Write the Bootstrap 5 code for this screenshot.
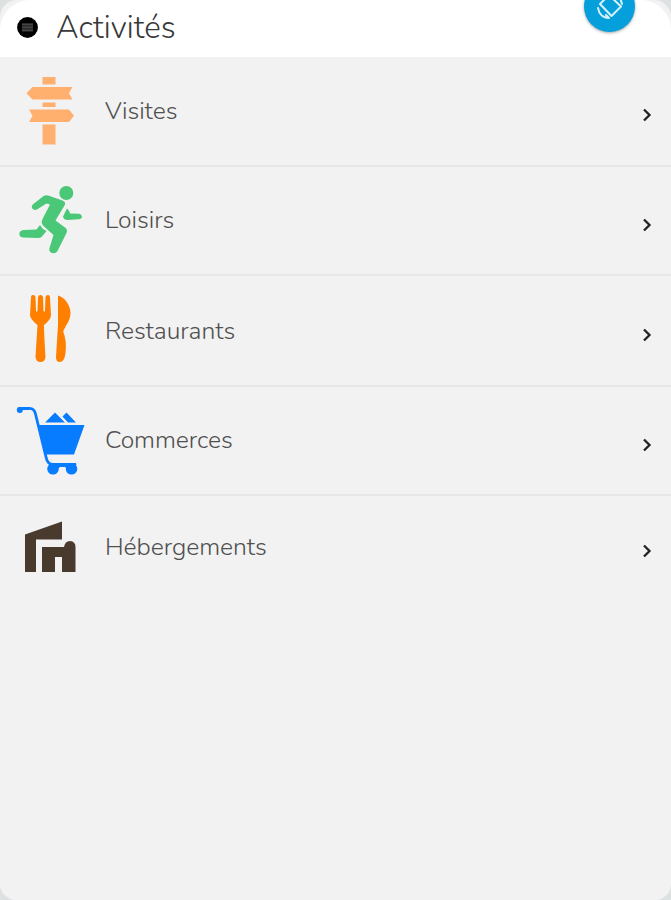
<!DOCTYPE html>
<html lang="fr">
<head>
<meta charset="utf-8">
<meta name="viewport" content="width=device-width, initial-scale=1">
<title>Activités</title>
<link href="https://cdn.jsdelivr.net/npm/bootstrap@5.3.0/dist/css/bootstrap.min.css" rel="stylesheet">
<style>
body { background: #dde1e1; font-family: Nunito, Lato, "Open Sans", sans-serif; font-weight: 300; color: #444; }
.screen { height: 900px; background: #f2f2f2; border-radius: 17px 17px 16px 16px; }
.topbar { height: 57px; background: #fff; border-radius: 30px 30px 0 0; padding-left: 17px; gap: 18px; }
.topbar h1 { font-size: 31.3px; font-weight: 300; line-height: 56px; letter-spacing: .1px; color: #383838; }
.menu-dot { width: 21px; height: 21px; margin-top: 17.3px; }
.rotate-btn { top: -19px; right: 36px; width: 51px; height: 51px; background: #05a0dc; box-shadow: 0 1px 3px rgba(0,0,0,.35); }
.entry { height: 110px; border-bottom: 2px solid #e7e7e7 !important; color: #505050; }
.entry.h109 { height: 109px; }
.entry.h111 { height: 111px; }
.entry.last { height: 102px; border-bottom: 0 !important; }
.entry-icon { width: 106px; height: 100%; }
.entry-label { font-size: 24.7px; line-height: 30px; margin-left: -1px; letter-spacing: -.04px; }
.h109 .entry-label { margin-bottom: 1px; }
.chev { width: 10px; height: 16px; margin-right: 19px; margin-top: 7px; }
.h109 .chev { margin-top: 9px; }
.h111 .chev { margin-top: 8px; }
</style>
<script src="https://cdn.jsdelivr.net/npm/bootstrap@5.3.0/dist/js/bootstrap.bundle.min.js"></script>
</head>
<body class="overflow-hidden">
<main class="screen position-relative overflow-hidden">
  <header class="topbar d-flex align-items-start">
    <svg class="menu-dot flex-shrink-0" viewBox="0 0 21 21"><circle cx="10.5" cy="10.5" r="10.4" fill="#000"/><path d="M5 6.500h11v8H5z" fill="#222"/><path d="M5 7.3h11M5 10.3h11M5 13.3h11" stroke="#444" stroke-width="1.7"/></svg>
    <h1 class="m-0">Activités</h1>
    <button class="rotate-btn btn position-absolute rounded-circle border-0 p-0" type="button" aria-label="Pivoter">
      <svg class="d-block" width="51" height="51" viewBox="584 -19 51 51" fill="none" stroke="#d5f1fb" stroke-width="2" stroke-linejoin="round" stroke-linecap="round"><path d="M600 4 609 -5 621 6.500 611.500 16Z"/><path d="M598 8C599 14 603 18 609 18L606 15M622 4C621 -1 618 -5 614 -7"/></svg>
    </button>
  </header>
  <div class="list-group list-group-flush">
    <a class="entry d-flex align-items-center text-decoration-none" href="#">
      <svg class="entry-icon flex-shrink-0" viewBox="0 57 106 108" fill="#ffb06e"><path d="M42.500 77H55.500v7.500H42.500zM32.500 87H72.500L69 93.200 72.500 99.500H32.500L26.500 93.200zM42.500 102.500H55.500v4.500H42.500zM29 109.500H69L74 115.700 69 122H29L32.500 115.700zM42.500 124.500H55.500V144.500H42.500z"/></svg>
      <span class="entry-label flex-grow-1">Visites</span>
      <svg class="chev" viewBox="0 0 10 16"><path d="M2 2.500 7.500 8 2 13.500" fill="none" stroke="#222" stroke-width="2.300"/></svg>
    </a>
    <a class="entry h109 d-flex align-items-center text-decoration-none" href="#">
      <svg class="entry-icon flex-shrink-0" viewBox="0 167 106 107" fill="#4bc877"><circle cx="66.300" cy="193" r="7"/><path d="M44 195.700Q46 195 49 195.700L62.500 200.500Q66.500 202 64.500 205.500L55.500 220.500 65 227.500Q68 229.500 66.500 233L57.500 251Q55.500 254 52 253Q48.500 251.500 49.500 248L53.500 235 43.500 226Q40.500 223 42.500 219L50 204.500 46.500 203.500 37 209.500Q33 211 31.800 207.500Q31.500 205.500 33 204.200ZM67 208.500Q69 210 70 213.500L79 213.800Q82 214.500 82 217Q81.800 219 79 219.300L67 220Q63.500 219.500 63 216.500ZM40 225Q42 229 46.500 231L42 236.500Q40.500 238 38 238L23 237.500Q19.500 237 19.300 234Q19.500 230.500 23.500 230L36.500 229.500Z"/></svg>
      <span class="entry-label flex-grow-1">Loisirs</span>
      <svg class="chev" viewBox="0 0 10 16"><path d="M2 2.500 7.500 8 2 13.500" fill="none" stroke="#222" stroke-width="2.300"/></svg>
    </a>
    <a class="entry h111 d-flex align-items-center text-decoration-none" href="#">
      <svg class="entry-icon flex-shrink-0" viewBox="0 276 106 109" fill="#ff8000"><path d="M31 297Q31 295 33 295Q35.500 295 35.500 297L36 311Q36.700 312.500 37.500 311L38 297Q38.500 295 40.500 295Q42.500 295 43 297L43.500 311Q44.300 312.500 45 311L45.500 297Q46 295 48 295Q49.800 295 50 297L51 315.500Q50.500 320 44 325Q44.200 338 45.500 357Q45 362 40.500 362Q36 362 35.500 357L37.500 325Q31 320 30 315.500ZM58 295.500C65 297 70.500 306 70.500 313C70.500 321 65 326 63.200 331.500Q67 341 65.500 353Q64.500 362 59.500 362Q56 362 56 357L58 325Z"/></svg>
      <span class="entry-label flex-grow-1">Restaurants</span>
      <svg class="chev" viewBox="0 0 10 16"><path d="M2 2.500 7.500 8 2 13.500" fill="none" stroke="#222" stroke-width="2.300"/></svg>
    </a>
    <a class="entry h109 d-flex align-items-center text-decoration-none" href="#">
      <svg class="entry-icon flex-shrink-0" viewBox="0 387 106 107" fill="#087cff"><path d="M19.500 408.500H29Q34 408 35.500 414L46 457Q47.500 464.500 53 464.500H75" fill="none" stroke="#087cff" stroke-width="2.800" stroke-linecap="round"/><circle cx="19.800" cy="410" r="3"/><path d="M38 425H84.500L74 454.500H45ZM45 422.500 55 412.500 65 422.500ZM68 422.500 62.500 416.500 66.500 412.500 76 422.500ZM49 463H76V468H49Z"/><circle cx="53" cy="468.800" r="5.800"/><circle cx="71.500" cy="468.800" r="5.800"/><path d="M59.500 467h6v4h-6z" fill="#f2f2f2"/></svg>
      <span class="entry-label flex-grow-1">Commerces</span>
      <svg class="chev" viewBox="0 0 10 16"><path d="M2 2.500 7.500 8 2 13.500" fill="none" stroke="#222" stroke-width="2.300"/></svg>
    </a>
    <a class="entry last d-flex align-items-center text-decoration-none" href="#">
      <svg class="entry-icon flex-shrink-0" viewBox="0 496 106 102" fill="#493a2e"><path d="M25 534.500 62 521.500V539.500H36V572H25ZM42 547H64Q65 541 70 541Q75.500 541.500 75.500 547V572H62V557H55V572H42Z"/></svg>
      <span class="entry-label flex-grow-1">Hébergements</span>
      <svg class="chev" viewBox="0 0 10 16"><path d="M2 2.500 7.500 8 2 13.500" fill="none" stroke="#222" stroke-width="2.300"/></svg>
    </a>
  </div>
</main>
</body>
</html>
